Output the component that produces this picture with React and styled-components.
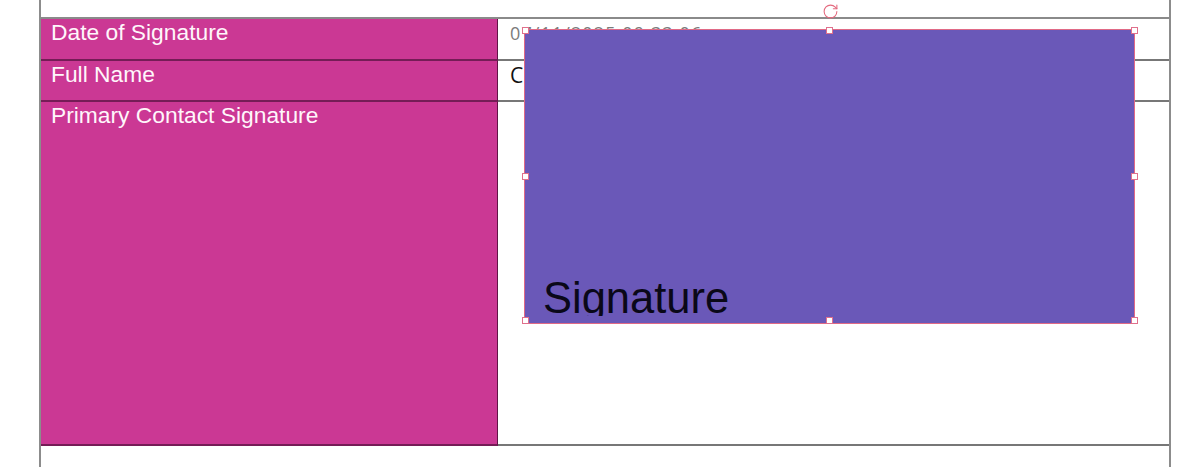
import React from 'react';
import styled, { createGlobalStyle } from 'styled-components';
import { RotateCw } from 'lucide-react';

const Global = createGlobalStyle`
  html, body { margin: 0; padding: 0; background: #ffffff; }
  body { font-family: "Liberation Sans", Arial, sans-serif; }
  * { box-sizing: border-box; }
`;

const Page = styled.div`
  height: 467px;
  overflow: hidden;
  padding: 0 29px 0 39px;
`;

const Frame = styled.div`
  position: relative;
  height: 100%;
  padding-top: 17px;
  border-left: 2px solid #8c8c8c;
  border-right: 2px solid #8c8c8c;
`;

const Table = styled.div`
  display: flex;
  flex-direction: column;
  border-top: 2px solid #8a8a8a;
`;

const Row = styled.div`
  display: grid;
  grid-template-columns: 457px 1fr;
  height: ${(p) => p.$h}px;
`;

const LabelCell = styled.div`
  background: #cb3894;
  color: #fff6fb;
  font-family: "Liberation Sans", Arial, sans-serif;
  font-size: 22.8px;
  line-height: 27px;
  padding: 0 0 0 10px;
  border-right: 1px solid rgba(60, 10, 45, 0.75);
  border-bottom: 2px solid rgba(60, 10, 45, 0.6);
`;

const ValueCell = styled.div`
  background: #ffffff;
  padding: ${(p) => p.$pt}px 0 0 12px;
  font-family: "Open Sans", "Noto Sans", sans-serif;
  font-size: ${(p) => p.$fs}px;
  line-height: ${(p) => p.$lh}px;
  color: ${(p) => p.$color};
  letter-spacing: ${(p) => p.$ls || 0}px;
  border-bottom: 2px solid #777777;
  white-space: nowrap;
  overflow: hidden;
`;

const Selection = styled.div`
  position: absolute;
  left: 483px;
  top: 29px;
  width: 611px;
  height: 295px;
  background: #6a58b8;
  border: 1px solid #e06a86;
  display: flex;
  flex-direction: column;
  justify-content: flex-end;
  padding: 0 0 7px 18px;
  z-index: 2;
`;

const SignatureText = styled.div`
  height: 39px;
  overflow: hidden;
  font-family: "Liberation Sans", Arial, sans-serif;
  font-size: 43.5px;
  line-height: 43px;
  color: #0a0818;
`;

const Handle = styled.span`
  position: absolute;
  width: 7px;
  height: 7px;
  background: #ffffff;
  border: 1px solid #e0708c;
  left: calc(${(p) => p.$x}% - 3.5px);
  top: calc(${(p) => p.$y}% - 3.5px);
`;

const RotateHandle = styled.span`
  position: absolute;
  left: calc(50% - 8px);
  top: -27px;
  width: 17px;
  height: 17px;
  display: flex;
  color: #e4697e;
`;

const handles = [
  [0, 0], [50, 0], [100, 0],
  [0, 50], [100, 50],
  [0, 99], [50, 99], [100, 99],
];

export default function App() {
  return (
    <>
      <Global />
      <Page>
        <Frame>
          <Table>
            <Row $h={42}>
              <LabelCell>Date of Signature</LabelCell>
              <ValueCell $pt={2} $fs={18} $lh={24} $color="#7b7b7b" $ls={1.1}>
                07/11/2025 09:33:06
              </ValueCell>
            </Row>
            <Row $h={41}>
              <LabelCell>Full Name</LabelCell>
              <ValueCell $pt={1} $fs={21} $lh={26} $color="#111111">
                C
              </ValueCell>
            </Row>
            <Row $h={344}>
              <LabelCell>Primary Contact Signature</LabelCell>
              <ValueCell $pt={0} $fs={16} $lh={22} $color="#111111" />
            </Row>
          </Table>
          <Selection>
            <RotateHandle>
              <RotateCw size={17} strokeWidth={1.5} />
            </RotateHandle>
            {handles.map(([x, y]) => (
              <Handle key={`${x}-${y}`} $x={x} $y={y} />
            ))}
            <SignatureText>Signature</SignatureText>
          </Selection>
        </Frame>
      </Page>
    </>
  );
}
